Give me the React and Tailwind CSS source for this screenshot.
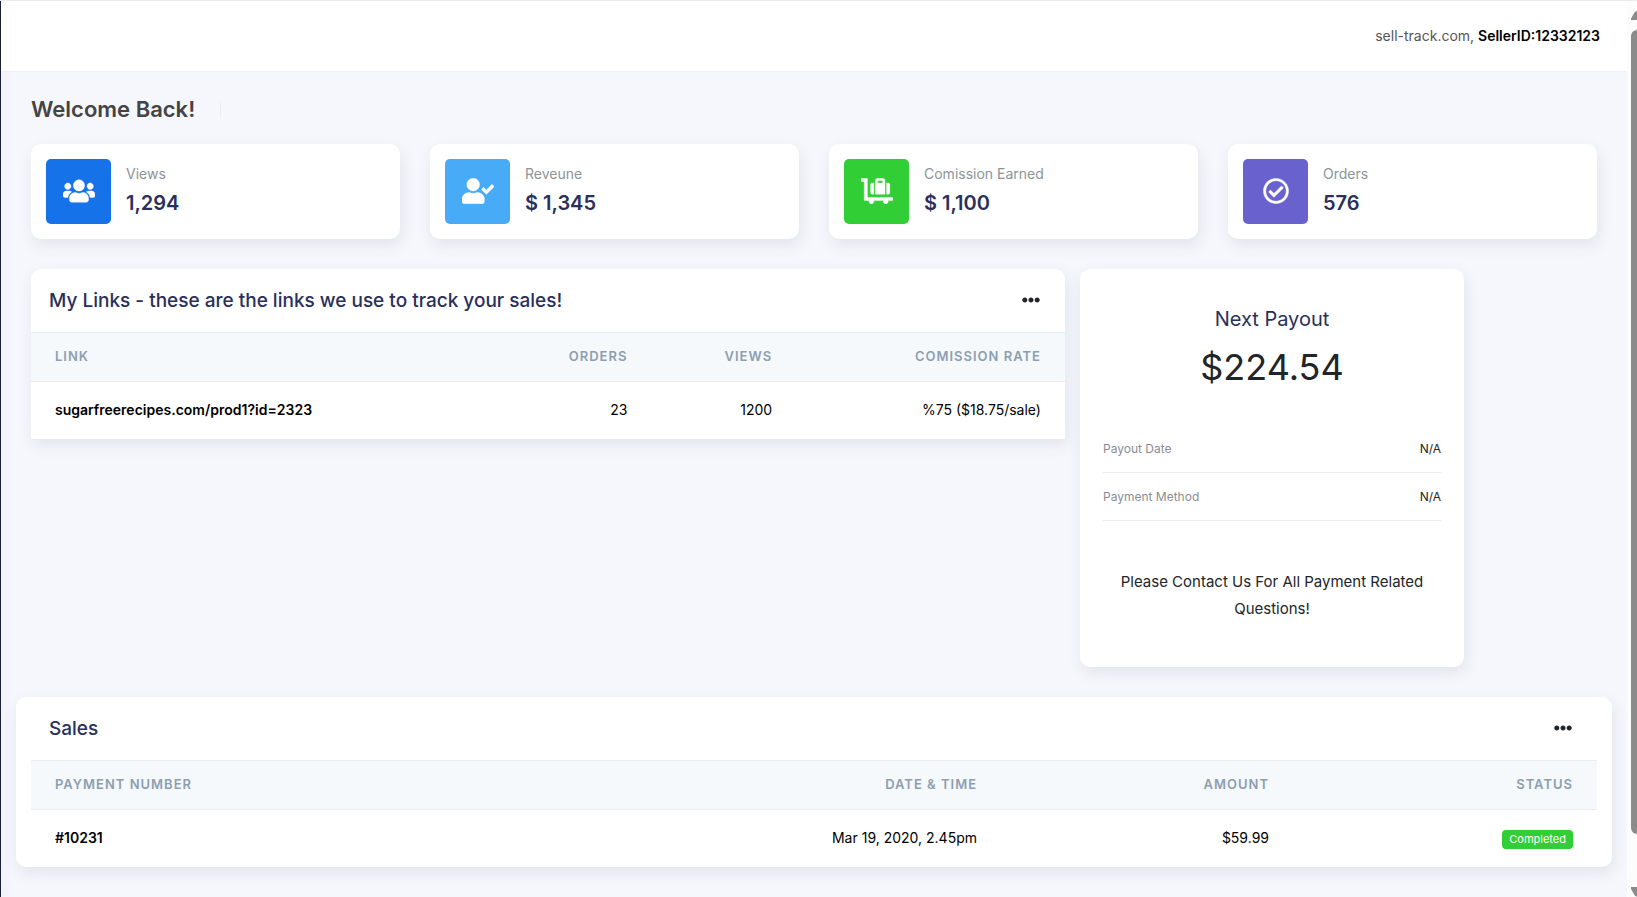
import React from 'react';
import { FaUsers, FaUserCheck, FaLuggageCart, FaRegCheckCircle, FaEllipsisH } from 'react-icons/fa';

const stats = [
  { label: 'Views', value: '1,294', Icon: FaUsers, color: 'bg-[#1572e8]' },
  { label: 'Reveune', value: '$ 1,345', Icon: FaUserCheck, color: 'bg-[#48abf7]' },
  { label: 'Comission Earned', value: '$ 1,100', Icon: FaLuggageCart, color: 'bg-[#31ce36]' },
  { label: 'Orders', value: '576', Icon: FaRegCheckCircle, color: 'bg-[#6861ce]' },
];

const links = [
  { url: 'sugarfreerecipes.com/prod1?id=2323', orders: '23', views: '1200', rate: '%75 ($18.75/sale)' },
];

const sales = [
  { number: '#10231', date: 'Mar 19, 2020, 2.45pm', amount: '$59.99', status: 'Completed' },
];

const payout = [
  { label: 'Payout Date', value: 'N/A' },
  { label: 'Payment Method', value: 'N/A' },
];

const cardShadow = 'shadow-[2px_6px_15px_0_rgba(69,65,78,0.1)]';
const th = 'h-[49px] px-6 pb-[2px] text-[13px] font-semibold uppercase tracking-[1px] text-[#8d9eb1]';
const td = 'h-[57px] px-6';

const StatCard = ({ label, value, Icon, color }) => (
  <div className={`flex items-center gap-[15px] rounded-[10px] bg-white p-[15px] ${cardShadow}`}>
    <div className={`flex size-[65px] shrink-0 items-center justify-center rounded-[5px] pb-[2px] text-white ${color}`}>
      <Icon className="h-[26px] w-8 stroke-[8]" />
    </div>
    <div>
      <p className="text-sm leading-[22px] text-[#8d9498]">{label}</p>
      <h4 className="text-xl leading-9 font-semibold text-[#2a2f5b]">{value}</h4>
    </div>
  </div>
);

const PanelHeader = ({ title }) => (
  <div className="flex h-[63px] items-center justify-between pr-[25px] pl-[18px]">
    <h2 className="text-[19px] font-medium text-[#2a2f5b]">{title}</h2>
    <button type="button" aria-label={`${title} menu`} className="pb-px text-[#212529]">
      <FaEllipsisH className="size-[18px]" />
    </button>
  </div>
);

const Scrollbar = () => (
  <div className="sticky top-0 flex h-screen w-[10px] shrink-0 flex-col overflow-hidden bg-[#fcfcfc] pt-[10px] pl-1">
    <svg className="h-[9px] w-[10px] shrink-0" viewBox="0 0 10 9" fill="#8b8b8b">
      <path d="M0 9V7.500L3.500 1.500Q4.500 0 6 0L10 6V9Z" />
    </svg>
    <div className="mt-[10px] w-3 flex-1 rounded-[6px] bg-[#8b8b8b]" />
    <svg className="mt-[53px] h-[11px] w-[10px] shrink-0" viewBox="0 0 10 11" fill="#8b8b8b">
      <path d="M0 0H10V8L6 9.500Q4.500 9.500 3.500 8L0 2Z" />
    </svg>
  </div>
);

const App = () => {
  return (
    <div className="flex min-h-screen border-t border-[#ebebeb] bg-[#f5f7fd] font-['Inter','Liberation_Sans',sans-serif] text-sm text-[#212529]">
      {/* edge of the collapsed sidebar */}
      <div className="w-px shrink-0 bg-[#1a2035] shadow-[4px_4px_10px_rgba(69,65,78,0.15)]" />

      <div className="min-w-0 flex-1">
        <header className="flex h-[71px] items-center justify-end border-b border-[#eef0f2] bg-white pr-[27px]">
          <p className="text-[#575757]">
            sell-track.com, <span className="font-semibold text-black">SellerID:12332123</span>
          </p>
        </header>

        <main className="px-[30px] pt-[22px] pb-7">
          <div className="mb-[18px] flex h-8 items-center">
            <h1 className="text-[22px] font-semibold text-[#444444]">Welcome Back!</h1>
            <div className="ml-[25px] h-4 w-px bg-[#eceef2]" />
          </div>

          <section className="grid grid-cols-4 gap-[30px]">
            {stats.map((stat) => (
              <StatCard key={stat.label} {...stat} />
            ))}
          </section>

          <div className="-mx-[15px] mt-[30px] flex items-start">
            <div className="w-2/3 px-[15px]">
              <section className={`rounded-t-[10px] bg-white ${cardShadow}`}>
                <PanelHeader title="My Links - these are the links we use to track your sales!" />
                <table className="w-full table-fixed text-black">
                  <thead className="border-y border-[#ebedf0] bg-[#f5f9fc]">
                    <tr>
                      <th scope="col" className={`w-[45%] text-left ${th}`}>Link</th>
                      <th scope="col" className={`w-[15%] text-right ${th}`}>Orders</th>
                      <th scope="col" className={`w-[14%] text-right ${th}`}>Views</th>
                      <th scope="col" className={`w-[26%] text-right ${th}`}>Comission Rate</th>
                    </tr>
                  </thead>
                  <tbody>
                    {links.map((link) => (
                      <tr key={link.url}>
                        <th scope="row" className={`text-left font-semibold whitespace-nowrap ${td}`}>{link.url}</th>
                        <td className={`text-right ${td}`}>{link.orders}</td>
                        <td className={`text-right ${td}`}>{link.views}</td>
                        <td className={`text-right ${td}`}>{link.rate}</td>
                      </tr>
                    ))}
                  </tbody>
                </table>
              </section>
            </div>

            <div className="w-1/4 pr-[15px]">
              <section className={`rounded-[10px] bg-white px-[23px] pt-[34px] pb-[45px] ${cardShadow}`}>
                <h2 className="text-center text-xl leading-8 text-[#2a2f5b]">Next Payout</h2>
                <p className="mt-1 text-center text-4xl leading-[56px]">$224.54</p>
                <dl className="mt-[30px] text-xs">
                  {payout.map((row) => (
                    <div key={row.label} className="flex h-12 items-center justify-between border-b border-[#ebedf0]">
                      <dt className="text-[#8b8d93]">{row.label}</dt>
                      <dd>{row.value}</dd>
                    </div>
                  ))}
                </dl>
                <p className="mt-[47px] text-center text-[15px] leading-[27px]">
                  Please Contact Us For All Payment Related Questions!
                </p>
              </section>
            </div>
          </div>

          <section className={`-mx-[15px] mt-[30px] rounded-[10px] bg-white px-[15px] ${cardShadow}`}>
            <PanelHeader title="Sales" />
            <table className="w-full table-fixed text-black">
              <thead className="border-y border-[#ebedf0] bg-[#f5f9fc]">
                <tr>
                  <th scope="col" className={`text-left ${th}`}>Payment Number</th>
                  <th scope="col" className={`w-[286px] text-right ${th}`}>Date &amp; Time</th>
                  <th scope="col" className={`w-[292px] text-right ${th}`}>Amount</th>
                  <th scope="col" className={`w-[304px] text-right ${th}`}>Status</th>
                </tr>
              </thead>
              <tbody>
                {sales.map((sale) => (
                  <tr key={sale.number}>
                    <th scope="row" className={`text-left font-semibold ${td}`}>{sale.number}</th>
                    <td className={`text-right ${td}`}>{sale.date}</td>
                    <td className={`text-right ${td}`}>{sale.amount}</td>
                    <td className={`text-right ${td}`}>
                      <span className="inline-block rounded-[4px] bg-[#31ce36] px-[7px] text-[11px] leading-[19px] text-white">
                        {sale.status}
                      </span>
                    </td>
                  </tr>
                ))}
              </tbody>
            </table>
          </section>
        </main>
      </div>

      <Scrollbar />
    </div>
  );
};

export default App;
